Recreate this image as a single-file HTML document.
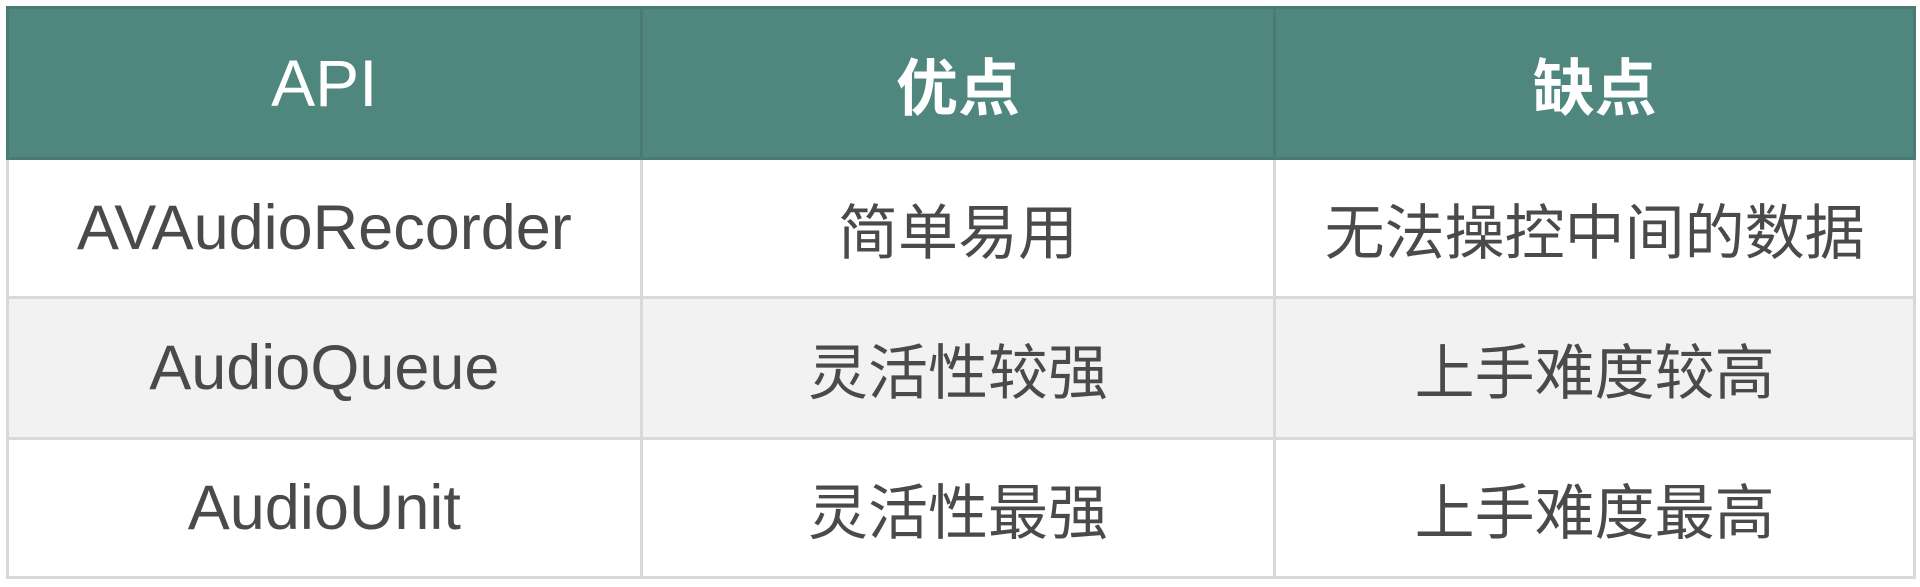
<!DOCTYPE html>
<html><head><meta charset="utf-8"><style>
html,body{margin:0;padding:0;background:#fff;width:1920px;height:587px;overflow:hidden}
table{position:absolute;left:6px;top:6px;border-collapse:collapse;width:1910px;
font-family:"Liberation Sans","Noto Sans CJK SC",sans-serif;}
td,th{border:3px solid #d9d9d9;text-align:center;padding:0;color:#4a4a4a;font-size:63px;font-weight:normal}
td.c{font-size:60px}
th{background:#4f877f;color:#fff;font-weight:bold;height:148px;border-color:#4a7a73;font-size:62px}
th.a{font-weight:normal;font-size:66px}
tr.r1 td{height:136px}
tr.r2 td{height:138px;background:#f2f2f2}
tr.r3 td{height:136px}
</style></head><body>
<table>
<colgroup><col style="width:634px"><col style="width:635px"><col style="width:641px"></colgroup>
<tr><th class="a">API</th><th>优点</th><th>缺点</th></tr>
<tr class="r1"><td>AVAudioRecorder</td><td class="c">简单易用</td><td class="c">无法操控中间的数据</td></tr>
<tr class="r2"><td>AudioQueue</td><td class="c">灵活性较强</td><td class="c">上手难度较高</td></tr>
<tr class="r3"><td>AudioUnit</td><td class="c">灵活性最强</td><td class="c">上手难度最高</td></tr>
</table>
</body></html>
